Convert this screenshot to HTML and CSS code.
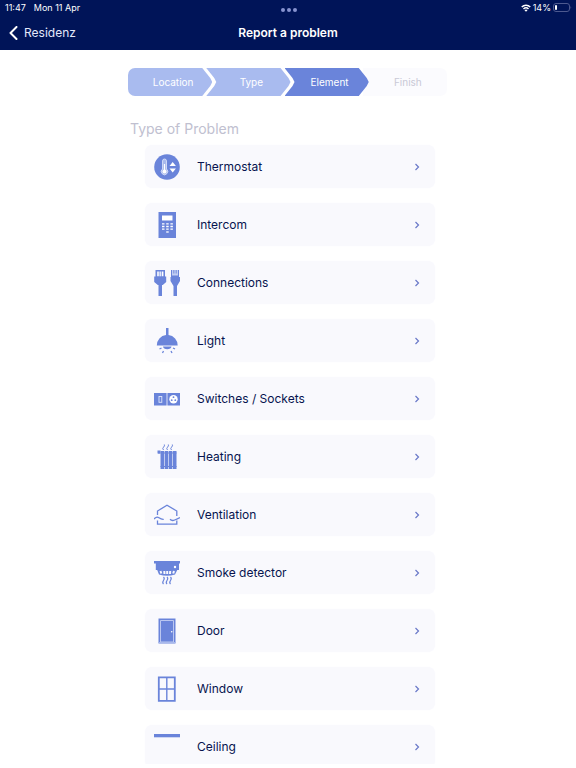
FILE: index.html
```html
<!DOCTYPE html>
<html lang="en">
<head>
  <meta charset="UTF-8" />
  <meta name="viewport" content="width=device-width, initial-scale=1.0"/>
  <title>Report a problem</title>
  <link rel="stylesheet" href="styles.css">
</head>
<body>
  <header class="header">
    <div class="status-bar">
      <div class="status-left">
        <span>11:47</span>
        <span>Mon 11 Apr</span>
      </div>
      <div class="dots"><i></i><i></i><i></i></div>
      <div class="status-right">
        <svg width="10" height="8" viewBox="0 0 20 16" fill="none" stroke="#fff" stroke-width="3">
          <path d="M1.500 6a12 12 0 0 1 17 0M5 10a7.200 7.200 0 0 1 10 0"/>
          <path d="M10 15.500l-3-3a4.200 4.200 0 0 1 6 0z" fill="#fff" stroke="none"/>
        </svg>
        <span>14%</span>
        <svg width="19" height="9" viewBox="0 0 19 9">
          <rect x=".5" y=".5" width="16" height="8" rx="2.500" fill="none" stroke="#4d598f"/>
          <rect x="2" y="2" width="2" height="5" rx="1" fill="#fff"/>
          <path d="M17.500 3q1.500 1.500 0 3z" fill="#4d598f"/>
        </svg>
      </div>
    </div>
    <nav class="nav">
      <a class="back" href="#">
        <svg width="9" height="14" viewBox="0 0 9 14" fill="none" stroke="#fff" stroke-width="2" stroke-linecap="round" stroke-linejoin="round"><path d="M7.500 1L1.500 7l6 6"/></svg>
        Residenz
      </a>
      <h1>Report a problem</h1>
    </nav>
  </header>

  <main class="content">
    <ol class="steps">
      <li class="step done first">Location</li>
      <li class="step done">Type</li>
      <li class="step active">Element</li>
      <li class="step last">Finish</li>
    </ol>

    <h2>Type of Problem</h2>

    <div class="list">
      <button class="item">
        <svg class="icon" viewBox="0 0 26 26">
          <circle cx="13" cy="13" r="12.800" fill="#6a84da"/>
          <path d="M8.500 15V7a2 2 0 0 1 4 0v8a3.200 3.200 0 1 1-4 0z" fill="#a9b9ec" stroke="#dfe6fb" stroke-width=".8"/>
          <path d="M10.500 10v7" stroke="#fff" stroke-width="1.200"/>
          <circle cx="10.500" cy="17.500" r="2" fill="#fff"/>
          <path d="M15.500 12l3.200-4 3.200 4zM15.500 14.500h6.400l-3.200 4z" fill="#fff"/>
        </svg>
        <span>Thermostat</span>
        <svg class="arrow" viewBox="0 0 6 8"><path d="M1.500 1l3 3-3 3"/></svg>
      </button>
      <button class="item">
        <svg class="icon" viewBox="0 0 26 26">
          <path d="M4.500 0h17.500v26H4.500z" fill="#6a84da"/>
          <path d="M8 3.500h10.500v5H8z" fill="#fff"/>
          <path d="M8 11.800h11M8 14.500h11M8 17.200h11" stroke="#fff" stroke-width="1.300" stroke-dasharray="2.500 1.700"/>
          <path d="M12.200 20h2.500" stroke="#fff" stroke-width="1.300"/>
        </svg>
        <span>Intercom</span>
        <svg class="arrow" viewBox="0 0 6 8"><path d="M1.500 1l3 3-3 3"/></svg>
      </button>
      <button class="item">
        <svg class="icon" viewBox="0 0 26 26" fill="#6a84da">
          <path d="M1.500 0h9.500v6.500h1.200V12l-3.400 3H8v11H4.500V15H3.800L.2 12V6.500h1.300z"/>
          <path d="M3.200 1.500h1.600v4.800H3.200zM7.800 1.500h1.600v4.800H7.800z" fill="#fff"/>
          <path d="M5.400 1.500h1.800v4.800H5.400z" fill="#dfe6fb"/>
          <path d="M17 0h8v7h1v4l-3 5v10h-3.500V16l-3-5V7H17z"/>
          <path d="M18 0h6v5.500h-6z" fill="#c4cff3"/>
          <path d="M19.500 0v3.500M21 0v3.500M22.500 0v3.500" stroke="#6a84da" stroke-width=".6"/>
        </svg>
        <span>Connections</span>
        <svg class="arrow" viewBox="0 0 6 8"><path d="M1.500 1l3 3-3 3"/></svg>
      </button>
      <button class="item">
        <svg class="icon" viewBox="0 0 26 26" fill="#6a84da">
          <path d="M12 0h2.500v7a10.500 10.500 0 0 1 9.200 10.500H2.800A10.500 10.500 0 0 1 12 7z"/>
          <path d="M9 18.500h8.500a4.300 3.300 0 0 1-8.500 0z"/>
          <path d="M7.500 20l-2 1M9.500 23L8.500 25M17 23l1 2M19 20l2 1" fill="none" stroke="#6a84da" stroke-width="1.300"/>
        </svg>
        <span>Light</span>
        <svg class="arrow" viewBox="0 0 6 8"><path d="M1.500 1l3 3-3 3"/></svg>
      </button>
      <button class="item">
        <svg class="icon" viewBox="0 0 26 26">
          <path d="M0 7h12.600v12.500H0zM13.400 7H26v12.500H13.400z" fill="#6a84da"/>
          <rect x="5" y="10.500" width="2.800" height="5.800" fill="none" stroke="#dfe6fb" stroke-width=".9"/>
          <circle cx="19.500" cy="13.300" r="4.200" fill="#fff"/>
          <circle cx="19.500" cy="11.200" r=".9" fill="#6a84da"/>
          <circle cx="17.700" cy="14.200" r=".9" fill="#6a84da"/>
          <circle cx="21.300" cy="14.200" r=".9" fill="#6a84da"/>
        </svg>
        <span>Switches / Sockets</span>
        <svg class="arrow" viewBox="0 0 6 8"><path d="M1.500 1l3 3-3 3"/></svg>
      </button>
      <button class="item">
        <svg class="icon" viewBox="0 0 26 26" fill="#6a84da">
          <path d="M3.500 6.500h3v3h-1V10h-1v-.5h-1z"/>
          <path d="M6.500 7h3.700v18H6.500zM10.800 7h3.500v18h-3.500zM14.900 7h3.500v18h-3.500zM19 7h3.500v18H19z"/>
          <path d="M6.500 9h16M6.500 22.500h16" stroke="#6a84da"/>
          <path d="M9.500 6q-1.500-1.500 0-2.800t.8-2.700M13.500 6q-1.500-1.500 0-2.800t.8-2.700M17.500 6q-1.500-1.500 0-2.800t.8-2.700" fill="none" stroke="#6a84da"/>
        </svg>
        <span>Heating</span>
        <svg class="arrow" viewBox="0 0 6 8"><path d="M1.500 1l3 3-3 3"/></svg>
      </button>
      <button class="item">
        <svg class="icon" viewBox="0 0 26 26" fill="none" stroke="#6a84da" stroke-width="1.300">
          <path d="M3.500 13V9L13 3.300 22.800 9v5M3.500 18.500v3.700h19.300v-3.700"/>
          <path d="M0 17q2.500-3 5-1.200t4.700 1.500M16 17.300q2 2 4.700.7t5.300-2.500"/>
        </svg>
        <span>Ventilation</span>
        <svg class="arrow" viewBox="0 0 6 8"><path d="M1.500 1l3 3-3 3"/></svg>
      </button>
      <button class="item">
        <svg class="icon" viewBox="0 0 26 26" fill="#6a84da">
          <path d="M0 1h26v2.500h-1V10H1.800V3.500H0z"/>
          <circle cx="21" cy="7" r="1.200" fill="#fff"/>
          <path d="M3 9.500h20.500l-2.500 5q-8 2.500-16 0z"/>
          <path d="M6.500 11l.8 2.500M10.300 11l.2 3M13.200 11v3M16.200 11l-.2 3M20 11l-.8 2.500" stroke="#f9f9fd" stroke-width="2"/>
          <path d="M9.500 17q1.500 1.500 0 3.500t0 3.500M13 17q1.500 1.500 0 3.500t0 3.500M16.500 17q1.500 1.500 0 3.500t0 3.500" fill="none" stroke="#6a84da" stroke-width="1.200"/>
        </svg>
        <span>Smoke detector</span>
        <svg class="arrow" viewBox="0 0 6 8"><path d="M1.500 1l3 3-3 3"/></svg>
      </button>
      <button class="item">
        <svg class="icon" viewBox="0 0 26 26">
          <path d="M4.500 .5h17v25h-17z" fill="#6a84da"/>
          <path d="M6.500 24V2.500h13V24z" fill="none" stroke="#c4cff3" stroke-width=".9"/>
          <path d="M4 24.500h18" stroke="#a9b9ec"/>
          <circle cx="17.700" cy="13.800" r=".8" fill="#fff"/>
        </svg>
        <span>Door</span>
        <svg class="arrow" viewBox="0 0 6 8"><path d="M1.500 1l3 3-3 3"/></svg>
      </button>
      <button class="item">
        <svg class="icon" viewBox="0 0 26 26" fill="none" stroke="#6a84da">
          <path d="M4.800 1.300h16v23.500h-16z" stroke-width="1.800"/>
          <path d="M12.800 1v24M4.500 13h16.500" stroke-width="1.400"/>
        </svg>
        <span>Window</span>
        <svg class="arrow" viewBox="0 0 6 8"><path d="M1.500 1l3 3-3 3"/></svg>
      </button>
      <button class="item">
        <svg class="icon" viewBox="0 0 26 26"><path d="M0 0h26v3.300H0z" fill="#6a84da"/></svg>
        <span>Ceiling</span>
        <svg class="arrow" viewBox="0 0 6 8"><path d="M1.500 1l3 3-3 3"/></svg>
      </button>
    </div>
  </main>
</body>
</html>
```
FILE: styles.css
```css
* {
  box-sizing: border-box;
}
body {
  font-family: Inter, "Liberation Sans", sans-serif;
  background-color: #fff;
  display: flex;
  flex-direction: column;
  height: 100vh;
  margin: 0;
}
.header {
  background-color: #001458;
  color: #fff;
  flex-shrink: 0;
}
.status-bar {
  display: grid;
  grid-template-columns: 1fr auto 1fr;
  align-items: center;
  height: 15px;
  padding: 0 4px 0 5px;
  font-size: 9px;
}
.status-left {
  display: flex;
  gap: 8px;
}
.status-right {
  display: flex;
  align-items: center;
  justify-content: flex-end;
  gap: 2px;
}
.dots {
  display: flex;
  gap: 2px;
  padding-top: 4px;
}
.dots i {
  width: 4px;
  height: 4px;
  border-radius: 50%;
  background-color: #8793d0;
}
.nav {
  display: grid;
  grid-template-columns: 1fr auto 1fr;
  align-items: center;
  height: 35px;
  padding: 0 9px;
}
.back {
  display: flex;
  align-items: center;
  gap: 6px;
  color: #e4e8fb;
  font-size: 12px;
  text-decoration: none;
}
h1 {
  margin: 0;
  font-size: 12px;
  font-weight: 600;
}
.content {
  flex: 1;
  width: 100%;
  max-width: 320px;
  margin: 0 auto 4px;
  padding-top: 18px;
  overflow-y: auto;
  scrollbar-width: none;
}
.steps {
  display: flex;
  margin: 0 1px 0 0;
  padding: 0;
  list-style: none;
}
.step {
  flex: 1;
  height: 28px;
  line-height: 28px;
  padding-left: 6px;
  margin-left: -6px;
  font-size: 10px;
  text-align: center;
  color: #fff;
  clip-path: polygon(0 0, calc(100% - 10px) 0, calc(100% - 2px) 10px, 100% 14px, calc(100% - 2px) 18px, calc(100% - 10px) 100%, 0 100%, 8px 18px, 10px 14px, 8px 10px);
}
.step.done {
  background-color: #a9bbef;
}
.step.active {
  position: relative;
  z-index: 1;
  background-color: #6a84da;
}
.step.first {
  margin-left: 0;
  border-radius: 7px 0 0 7px;
  clip-path: polygon(0 0, calc(100% - 10px) 0, calc(100% - 2px) 10px, 100% 14px, calc(100% - 2px) 18px, calc(100% - 10px) 100%, 0 100%);
}
.step.last {
  background-color: #fbfbfe;
  border-radius: 0 7px 7px 0;
  color: #c9c9d6;
  clip-path: none;
}
h2 {
  margin: 22px 0 6px 2px;
  font-size: 14px;
  line-height: 21px;
  font-weight: 400;
  color: #c0c0d0;
}
.list {
  display: flex;
  flex-direction: column;
  gap: 15px;
  padding: 0 13px 0 17px;
}
.item {
  display: flex;
  align-items: center;
  flex-shrink: 0;
  height: 43px;
  padding: 0 15px 0 9px;
  border: none;
  border-radius: 7px;
  background-color: #f9f9fd;
  box-shadow: 0 0 2px #fafaff;
  color: #07144f;
  font-family: inherit;
  font-size: 12px;
  text-align: left;
  cursor: pointer;
}
.item span {
  flex: 1;
}
.icon {
  width: 26px;
  height: 26px;
  margin-right: 17px;
}
.arrow {
  width: 6px;
  height: 8px;
  fill: none;
  stroke: #6a79c8;
  stroke-width: 1.2px;
}
```
